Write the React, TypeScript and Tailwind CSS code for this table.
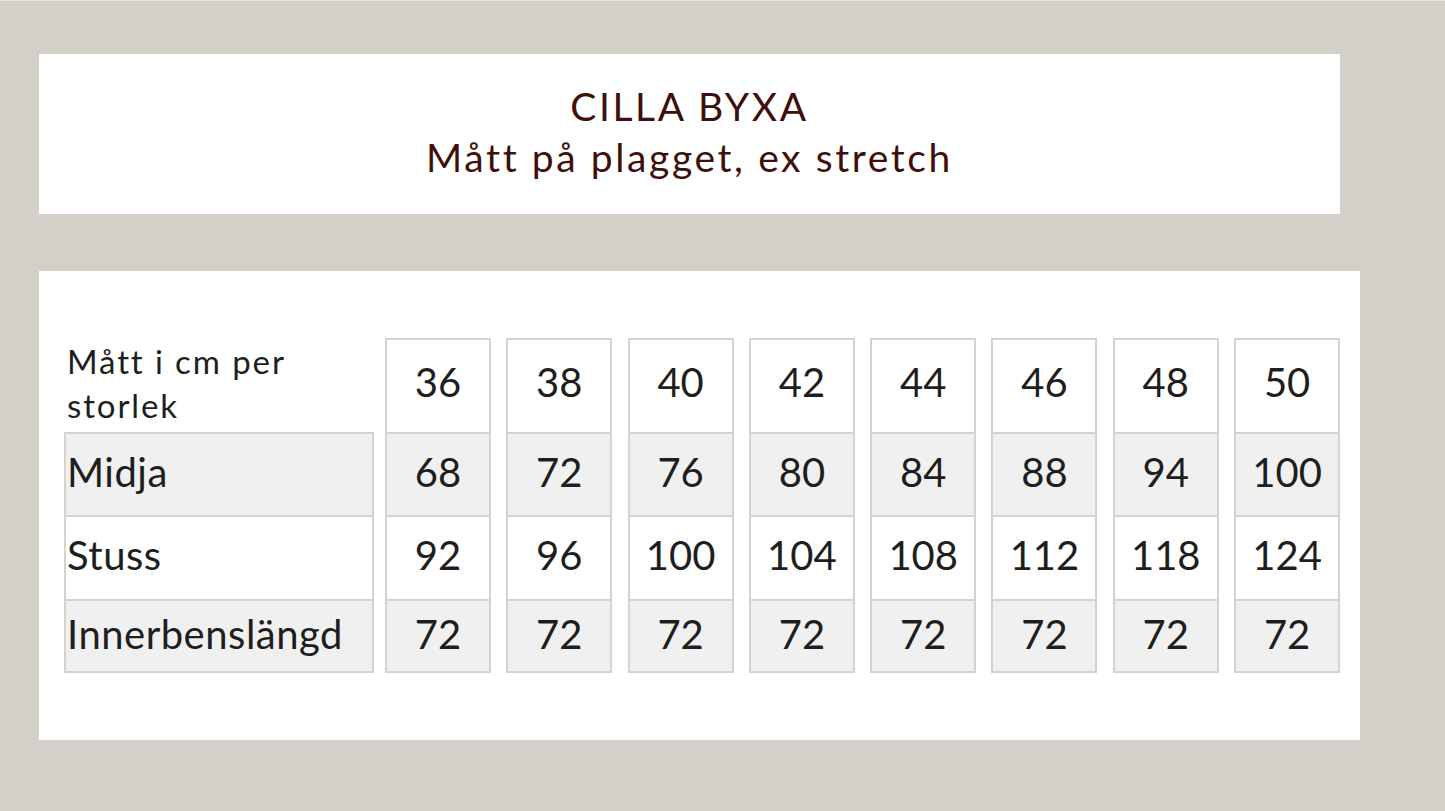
import React from "react";

const sizes = ["36", "38", "40", "42", "44", "46", "48", "50"];
const midja = ["68", "72", "76", "80", "84", "88", "94", "100"];
const stuss = ["92", "96", "100", "104", "108", "112", "118", "124"];
const inner = ["72", "72", "72", "72", "72", "72", "72", "72"];

export default function App() {
  return (
    <div
      className="w-[1445px] h-[811px] bg-[#d3d0c9] border-t border-[#e4e3df] flex flex-col pl-[39px] pt-[53px] text-[#1e1e1e]"
      style={{ fontFamily: "Lato, 'Open Sans', sans-serif" }}
    >
      <div className="w-[1301px] h-[160px] bg-white flex flex-col items-center justify-center text-[#3f100b] text-[39px] leading-[51px] tracking-[2.6px] pb-[4px]">
        <div>CILLA BYXA</div>
        <div>Mått på plagget, ex stretch</div>
      </div>
      <div className="mt-[57px] w-[1321px] h-[469px] bg-white pl-[25px] pt-[67px]">
        <div className="flex">
          <div className="w-[310px] flex flex-col">
            <div className="h-[94px] pl-[3px] pt-[1px] text-[33px] leading-[44px] tracking-[1.9px]">
              Mått i cm per
              <br />
              storlek
            </div>
            <div className="border-2 border-[#d6d3cc] flex flex-col text-[40px] tracking-[0.5px]">
              <div className="h-[81px] bg-[#f0f0f0] flex items-center pl-[1px] pb-[6px]">Midja</div>
              <div className="h-[84px] border-t-2 border-[#d6d3cc] flex items-center pl-[1px] pb-[6px]">Stuss</div>
              <div className="h-[72px] border-t-2 border-[#d6d3cc] bg-[#f0f0f0] flex items-center pl-[1px] pb-[5px]">Innerbenslängd</div>
            </div>
          </div>
          <div className="ml-[11px] flex gap-[15.3px]">
            {sizes.map((s, i) => (
              <div key={s} className="w-[106px] border-2 border-[#d6d3cc] flex flex-col text-[40px]">
                <div className="h-[92px] flex items-center justify-center pb-[9px]">{s}</div>
                <div className="h-[83px] border-t-2 border-[#d6d3cc] bg-[#f0f0f0] flex items-center justify-center pb-[6px]">{midja[i]}</div>
                <div className="h-[84px] border-t-2 border-[#d6d3cc] flex items-center justify-center pb-[6px]">{stuss[i]}</div>
                <div className="h-[72px] border-t-2 border-[#d6d3cc] bg-[#f0f0f0] flex items-center justify-center pb-[5px]">{inner[i]}</div>
              </div>
            ))}
          </div>
        </div>
      </div>
    </div>
  );
}
